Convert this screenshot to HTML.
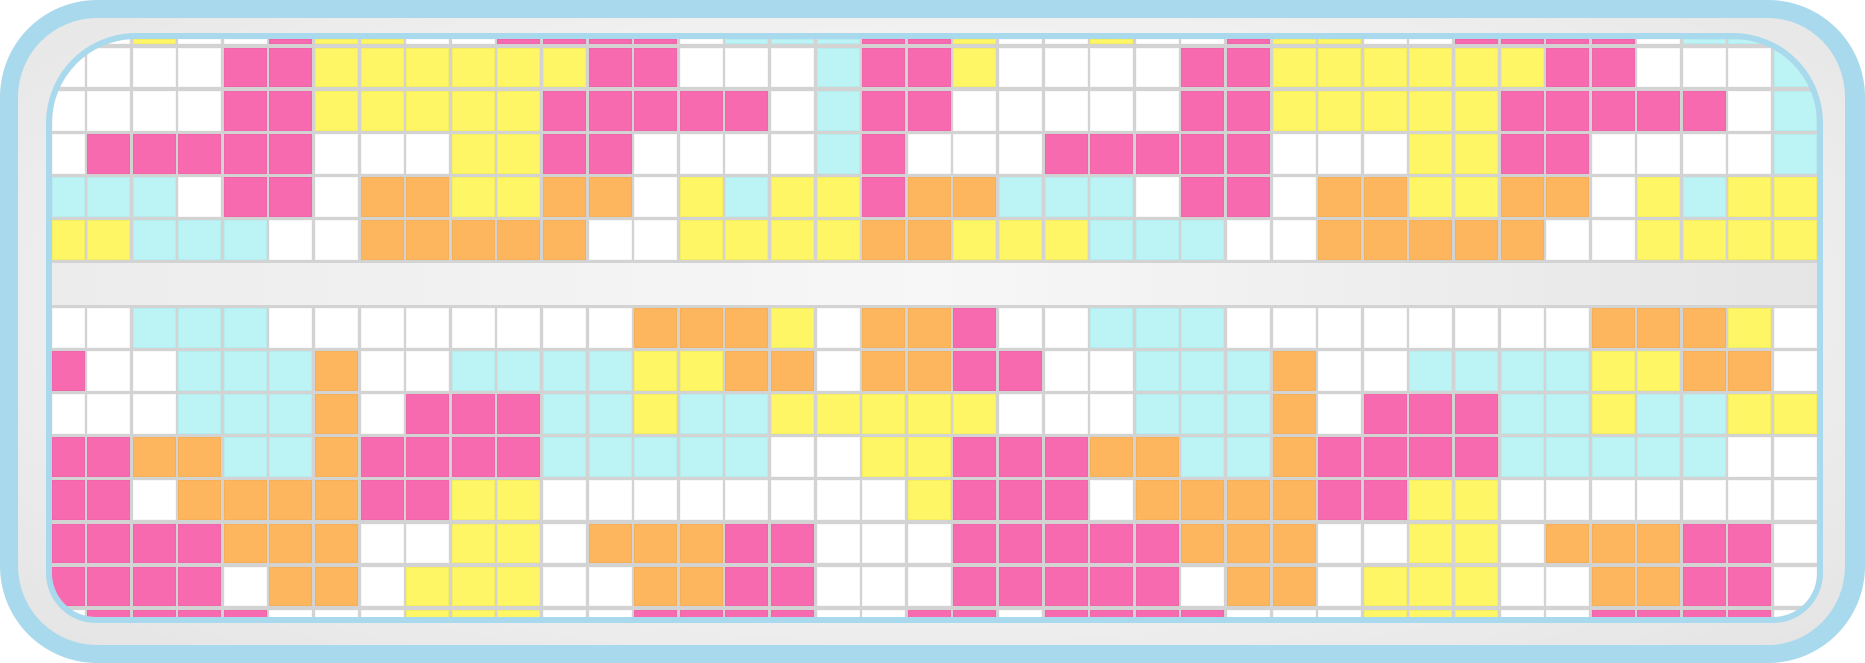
<!DOCTYPE html>
<html><head><meta charset="utf-8"><style>
html,body{margin:0;padding:0;width:1865px;height:663px;overflow:hidden;background:#fff}
.outer{position:absolute;left:0;top:0;width:1865px;height:663px;box-sizing:border-box;border-style:solid;border-color:#a9d9ec;border-width:18px 20px 18px 18px;border-radius:97px;background:radial-gradient(ellipse at 50% 45%,#fafafa 0%,#f1f1f1 55%,#e4e4e4 100%)}
.inner{position:absolute;left:46px;top:32.6px;width:1777px;height:590px;box-sizing:border-box;border:6px solid #a9d9ec;border-radius:90px 90px 50px 50px;overflow:hidden;background:#d3d3d3}
.g{position:absolute;left:0;top:0.3px;display:grid;grid-template-columns:32.5px repeat(38,43px);column-gap:2.6px;row-gap:3.4px;grid-template-rows:5.5px repeat(5,39.7px) 41.6px repeat(7,39.7px) 8px}
.g i{display:block;box-shadow:inset 0 0 0 1px rgba(0,0,0,0.03)}
.W{background:#fff}.P{background:#f86ab0}.Y{background:#fef665}.C{background:#bcf4f5}.O{background:#fdb65d}
.sep{grid-column:1/-1;background:linear-gradient(90deg,#ececec 0%,#f7f7f7 50%,#e5e5e5 100%)}
</style></head><body>
<div class="outer"></div>
<div class="inner"><div class="g" id="g">
<i class=W></i><i class=W></i><i class=Y></i><i class=W></i><i class=W></i><i class=P></i><i class=Y></i><i class=Y></i><i class=W></i><i class=W></i><i class=P></i><i class=P></i><i class=P></i><i class=P></i><i class=W></i><i class=C></i><i class=C></i><i class=C></i><i class=P></i><i class=P></i><i class=Y></i><i class=W></i><i class=W></i><i class=Y></i><i class=W></i><i class=W></i><i class=P></i><i class=Y></i><i class=Y></i><i class=W></i><i class=W></i><i class=P></i><i class=P></i><i class=P></i><i class=P></i><i class=W></i><i class=C></i><i class=C></i><i class=C></i>
<i class=W></i><i class=W></i><i class=W></i><i class=W></i><i class=P></i><i class=P></i><i class=Y></i><i class=Y></i><i class=Y></i><i class=Y></i><i class=Y></i><i class=Y></i><i class=P></i><i class=P></i><i class=W></i><i class=W></i><i class=W></i><i class=C></i><i class=P></i><i class=P></i><i class=Y></i><i class=W></i><i class=W></i><i class=W></i><i class=W></i><i class=P></i><i class=P></i><i class=Y></i><i class=Y></i><i class=Y></i><i class=Y></i><i class=Y></i><i class=Y></i><i class=P></i><i class=P></i><i class=W></i><i class=W></i><i class=W></i><i class=C></i>
<i class=W></i><i class=W></i><i class=W></i><i class=W></i><i class=P></i><i class=P></i><i class=Y></i><i class=Y></i><i class=Y></i><i class=Y></i><i class=Y></i><i class=P></i><i class=P></i><i class=P></i><i class=P></i><i class=P></i><i class=W></i><i class=C></i><i class=P></i><i class=P></i><i class=W></i><i class=W></i><i class=W></i><i class=W></i><i class=W></i><i class=P></i><i class=P></i><i class=Y></i><i class=Y></i><i class=Y></i><i class=Y></i><i class=Y></i><i class=P></i><i class=P></i><i class=P></i><i class=P></i><i class=P></i><i class=W></i><i class=C></i>
<i class=W></i><i class=P></i><i class=P></i><i class=P></i><i class=P></i><i class=P></i><i class=W></i><i class=W></i><i class=W></i><i class=Y></i><i class=Y></i><i class=P></i><i class=P></i><i class=W></i><i class=W></i><i class=W></i><i class=W></i><i class=C></i><i class=P></i><i class=W></i><i class=W></i><i class=W></i><i class=P></i><i class=P></i><i class=P></i><i class=P></i><i class=P></i><i class=W></i><i class=W></i><i class=W></i><i class=Y></i><i class=Y></i><i class=P></i><i class=P></i><i class=W></i><i class=W></i><i class=W></i><i class=W></i><i class=C></i>
<i class=C></i><i class=C></i><i class=C></i><i class=W></i><i class=P></i><i class=P></i><i class=W></i><i class=O></i><i class=O></i><i class=Y></i><i class=Y></i><i class=O></i><i class=O></i><i class=W></i><i class=Y></i><i class=C></i><i class=Y></i><i class=Y></i><i class=P></i><i class=O></i><i class=O></i><i class=C></i><i class=C></i><i class=C></i><i class=W></i><i class=P></i><i class=P></i><i class=W></i><i class=O></i><i class=O></i><i class=Y></i><i class=Y></i><i class=O></i><i class=O></i><i class=W></i><i class=Y></i><i class=C></i><i class=Y></i><i class=Y></i>
<i class=Y></i><i class=Y></i><i class=C></i><i class=C></i><i class=C></i><i class=W></i><i class=W></i><i class=O></i><i class=O></i><i class=O></i><i class=O></i><i class=O></i><i class=W></i><i class=W></i><i class=Y></i><i class=Y></i><i class=Y></i><i class=Y></i><i class=O></i><i class=O></i><i class=Y></i><i class=Y></i><i class=Y></i><i class=C></i><i class=C></i><i class=C></i><i class=W></i><i class=W></i><i class=O></i><i class=O></i><i class=O></i><i class=O></i><i class=O></i><i class=W></i><i class=W></i><i class=Y></i><i class=Y></i><i class=Y></i><i class=Y></i>
<div class="sep"></div>
<i class=W></i><i class=W></i><i class=C></i><i class=C></i><i class=C></i><i class=W></i><i class=W></i><i class=W></i><i class=W></i><i class=W></i><i class=W></i><i class=W></i><i class=W></i><i class=O></i><i class=O></i><i class=O></i><i class=Y></i><i class=W></i><i class=O></i><i class=O></i><i class=P></i><i class=W></i><i class=W></i><i class=C></i><i class=C></i><i class=C></i><i class=W></i><i class=W></i><i class=W></i><i class=W></i><i class=W></i><i class=W></i><i class=W></i><i class=W></i><i class=O></i><i class=O></i><i class=O></i><i class=Y></i><i class=W></i>
<i class=P></i><i class=W></i><i class=W></i><i class=C></i><i class=C></i><i class=C></i><i class=O></i><i class=W></i><i class=W></i><i class=C></i><i class=C></i><i class=C></i><i class=C></i><i class=Y></i><i class=Y></i><i class=O></i><i class=O></i><i class=W></i><i class=O></i><i class=O></i><i class=P></i><i class=P></i><i class=W></i><i class=W></i><i class=C></i><i class=C></i><i class=C></i><i class=O></i><i class=W></i><i class=W></i><i class=C></i><i class=C></i><i class=C></i><i class=C></i><i class=Y></i><i class=Y></i><i class=O></i><i class=O></i><i class=W></i>
<i class=W></i><i class=W></i><i class=W></i><i class=C></i><i class=C></i><i class=C></i><i class=O></i><i class=W></i><i class=P></i><i class=P></i><i class=P></i><i class=C></i><i class=C></i><i class=Y></i><i class=C></i><i class=C></i><i class=Y></i><i class=Y></i><i class=Y></i><i class=Y></i><i class=Y></i><i class=W></i><i class=W></i><i class=W></i><i class=C></i><i class=C></i><i class=C></i><i class=O></i><i class=W></i><i class=P></i><i class=P></i><i class=P></i><i class=C></i><i class=C></i><i class=Y></i><i class=C></i><i class=C></i><i class=Y></i><i class=Y></i>
<i class=P></i><i class=P></i><i class=O></i><i class=O></i><i class=C></i><i class=C></i><i class=O></i><i class=P></i><i class=P></i><i class=P></i><i class=P></i><i class=C></i><i class=C></i><i class=C></i><i class=C></i><i class=C></i><i class=W></i><i class=W></i><i class=Y></i><i class=Y></i><i class=P></i><i class=P></i><i class=P></i><i class=O></i><i class=O></i><i class=C></i><i class=C></i><i class=O></i><i class=P></i><i class=P></i><i class=P></i><i class=P></i><i class=C></i><i class=C></i><i class=C></i><i class=C></i><i class=C></i><i class=W></i><i class=W></i>
<i class=P></i><i class=P></i><i class=W></i><i class=O></i><i class=O></i><i class=O></i><i class=O></i><i class=P></i><i class=P></i><i class=Y></i><i class=Y></i><i class=W></i><i class=W></i><i class=W></i><i class=W></i><i class=W></i><i class=W></i><i class=W></i><i class=W></i><i class=Y></i><i class=P></i><i class=P></i><i class=P></i><i class=W></i><i class=O></i><i class=O></i><i class=O></i><i class=O></i><i class=P></i><i class=P></i><i class=Y></i><i class=Y></i><i class=W></i><i class=W></i><i class=W></i><i class=W></i><i class=W></i><i class=W></i><i class=W></i>
<i class=P></i><i class=P></i><i class=P></i><i class=P></i><i class=O></i><i class=O></i><i class=O></i><i class=W></i><i class=W></i><i class=Y></i><i class=Y></i><i class=W></i><i class=O></i><i class=O></i><i class=O></i><i class=P></i><i class=P></i><i class=W></i><i class=W></i><i class=W></i><i class=P></i><i class=P></i><i class=P></i><i class=P></i><i class=P></i><i class=O></i><i class=O></i><i class=O></i><i class=W></i><i class=W></i><i class=Y></i><i class=Y></i><i class=W></i><i class=O></i><i class=O></i><i class=O></i><i class=P></i><i class=P></i><i class=W></i>
<i class=P></i><i class=P></i><i class=P></i><i class=P></i><i class=W></i><i class=O></i><i class=O></i><i class=W></i><i class=Y></i><i class=Y></i><i class=Y></i><i class=W></i><i class=W></i><i class=O></i><i class=O></i><i class=P></i><i class=P></i><i class=W></i><i class=W></i><i class=W></i><i class=P></i><i class=P></i><i class=P></i><i class=P></i><i class=P></i><i class=W></i><i class=O></i><i class=O></i><i class=W></i><i class=Y></i><i class=Y></i><i class=Y></i><i class=W></i><i class=W></i><i class=O></i><i class=O></i><i class=P></i><i class=P></i><i class=W></i>
<i class=W></i><i class=P></i><i class=P></i><i class=P></i><i class=P></i><i class=W></i><i class=W></i><i class=W></i><i class=Y></i><i class=Y></i><i class=Y></i><i class=W></i><i class=W></i><i class=P></i><i class=P></i><i class=P></i><i class=P></i><i class=W></i><i class=W></i><i class=P></i><i class=P></i><i class=W></i><i class=P></i><i class=P></i><i class=P></i><i class=P></i><i class=W></i><i class=W></i><i class=W></i><i class=Y></i><i class=Y></i><i class=Y></i><i class=W></i><i class=W></i><i class=P></i><i class=P></i><i class=P></i><i class=P></i><i class=W></i>
</div></div>
</body></html>
